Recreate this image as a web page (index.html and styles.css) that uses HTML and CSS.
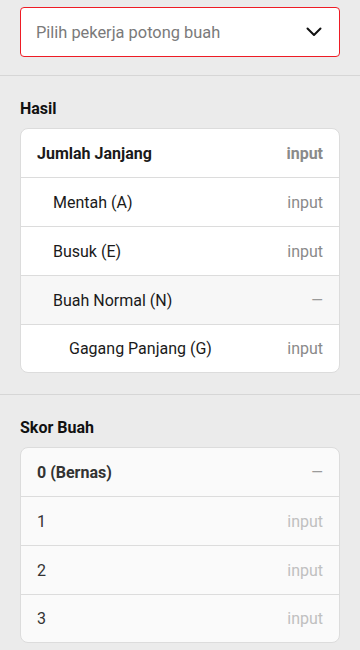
FILE: index.html
```html
<!DOCTYPE html>
<html lang="id">
<head>
<meta charset="utf-8">
<link rel="stylesheet" href="styles.css">
</head>
<body>
<div class="page">
  <div class="top">
    <div class="select">
      <span class="placeholder">Pilih pekerja potong buah</span>
      <svg class="chev" width="16" height="10" viewBox="0 0 16 10"><path d="M1.5 1.5 L8 8 L14.5 1.5" fill="none" stroke="#111" stroke-width="2" stroke-linecap="round" stroke-linejoin="round"/></svg>
    </div>
  </div>
  <section class="section">
    <h2 class="title">Hasil</h2>
    <div class="card">
      <div class="row"><span class="label bold">Jumlah Janjang</span><span class="val bold">input</span></div>
      <div class="row lvl1"><span class="label">Mentah (A)</span><span class="val">input</span></div>
      <div class="row lvl1"><span class="label">Busuk (E)</span><span class="val">input</span></div>
      <div class="row lvl1 shaded"><span class="label">Buah Normal (N)</span><span class="dash">—</span></div>
      <div class="row lvl2"><span class="label">Gagang Panjang (G)</span><span class="val">input</span></div>
    </div>
  </section>
  <section class="section">
    <h2 class="title">Skor Buah</h2>
    <div class="card muted">
      <div class="row"><span class="label bold">0 (Bernas)</span><span class="dash">—</span></div>
      <div class="row"><span class="label">1</span><span class="val">input</span></div>
      <div class="row"><span class="label">2</span><span class="val">input</span></div>
      <div class="row"><span class="label">3</span><span class="val">input</span></div>
    </div>
  </section>
</div>
</body>
</html>
```
FILE: styles.css
```css
html, body {
  margin: 0;
  padding: 0;
  background: #ebebeb;
}
body {
  font-family: Roboto, "Noto Sans", sans-serif;
  color: #1a1a1a;
}
.page {
  width: 360px;
}
.top {
  padding: 7px 20px 18px;
}
.select {
  box-sizing: border-box;
  height: 50px;
  background: #fff;
  border: 1px solid #ee1c25;
  border-radius: 4px;
  display: flex;
  align-items: center;
  justify-content: space-between;
  padding: 0 17px 0 15px;
}
.placeholder {
  font-size: 16.4px;
  color: #7a7a7a;
}
.chev {
  display: block;
}
.section {
  border-top: 1px solid #d6d6d6;
  padding: 22px 20px 21px;
}
.title {
  margin: 0 0 9px;
  font-size: 16px;
  line-height: 21px;
  font-weight: 700;
  color: #111;
}
.card {
  background: #fff;
  border: 1px solid #dcdcdc;
  border-radius: 8px;
  overflow: hidden;
}
.row {
  height: 48px;
  display: flex;
  align-items: center;
  justify-content: space-between;
  padding: 0 16px;
  font-size: 16px;
}
.row + .row {
  border-top: 1px solid #dcdcdc;
}
.row:last-child { height: 47px; }
.lvl1 { padding-left: 32px; }
.lvl2 { padding-left: 48px; }
.shaded { background: #f7f7f7; }
.bold { font-weight: 700; }
.val { color: #8a8a8a; }
.dash { color: #9a9a9a; font-size: 15px; }
.muted { background: #fafafa; }
.muted .label { color: #333; }
.muted .val { color: #c0c0c0; }
```
